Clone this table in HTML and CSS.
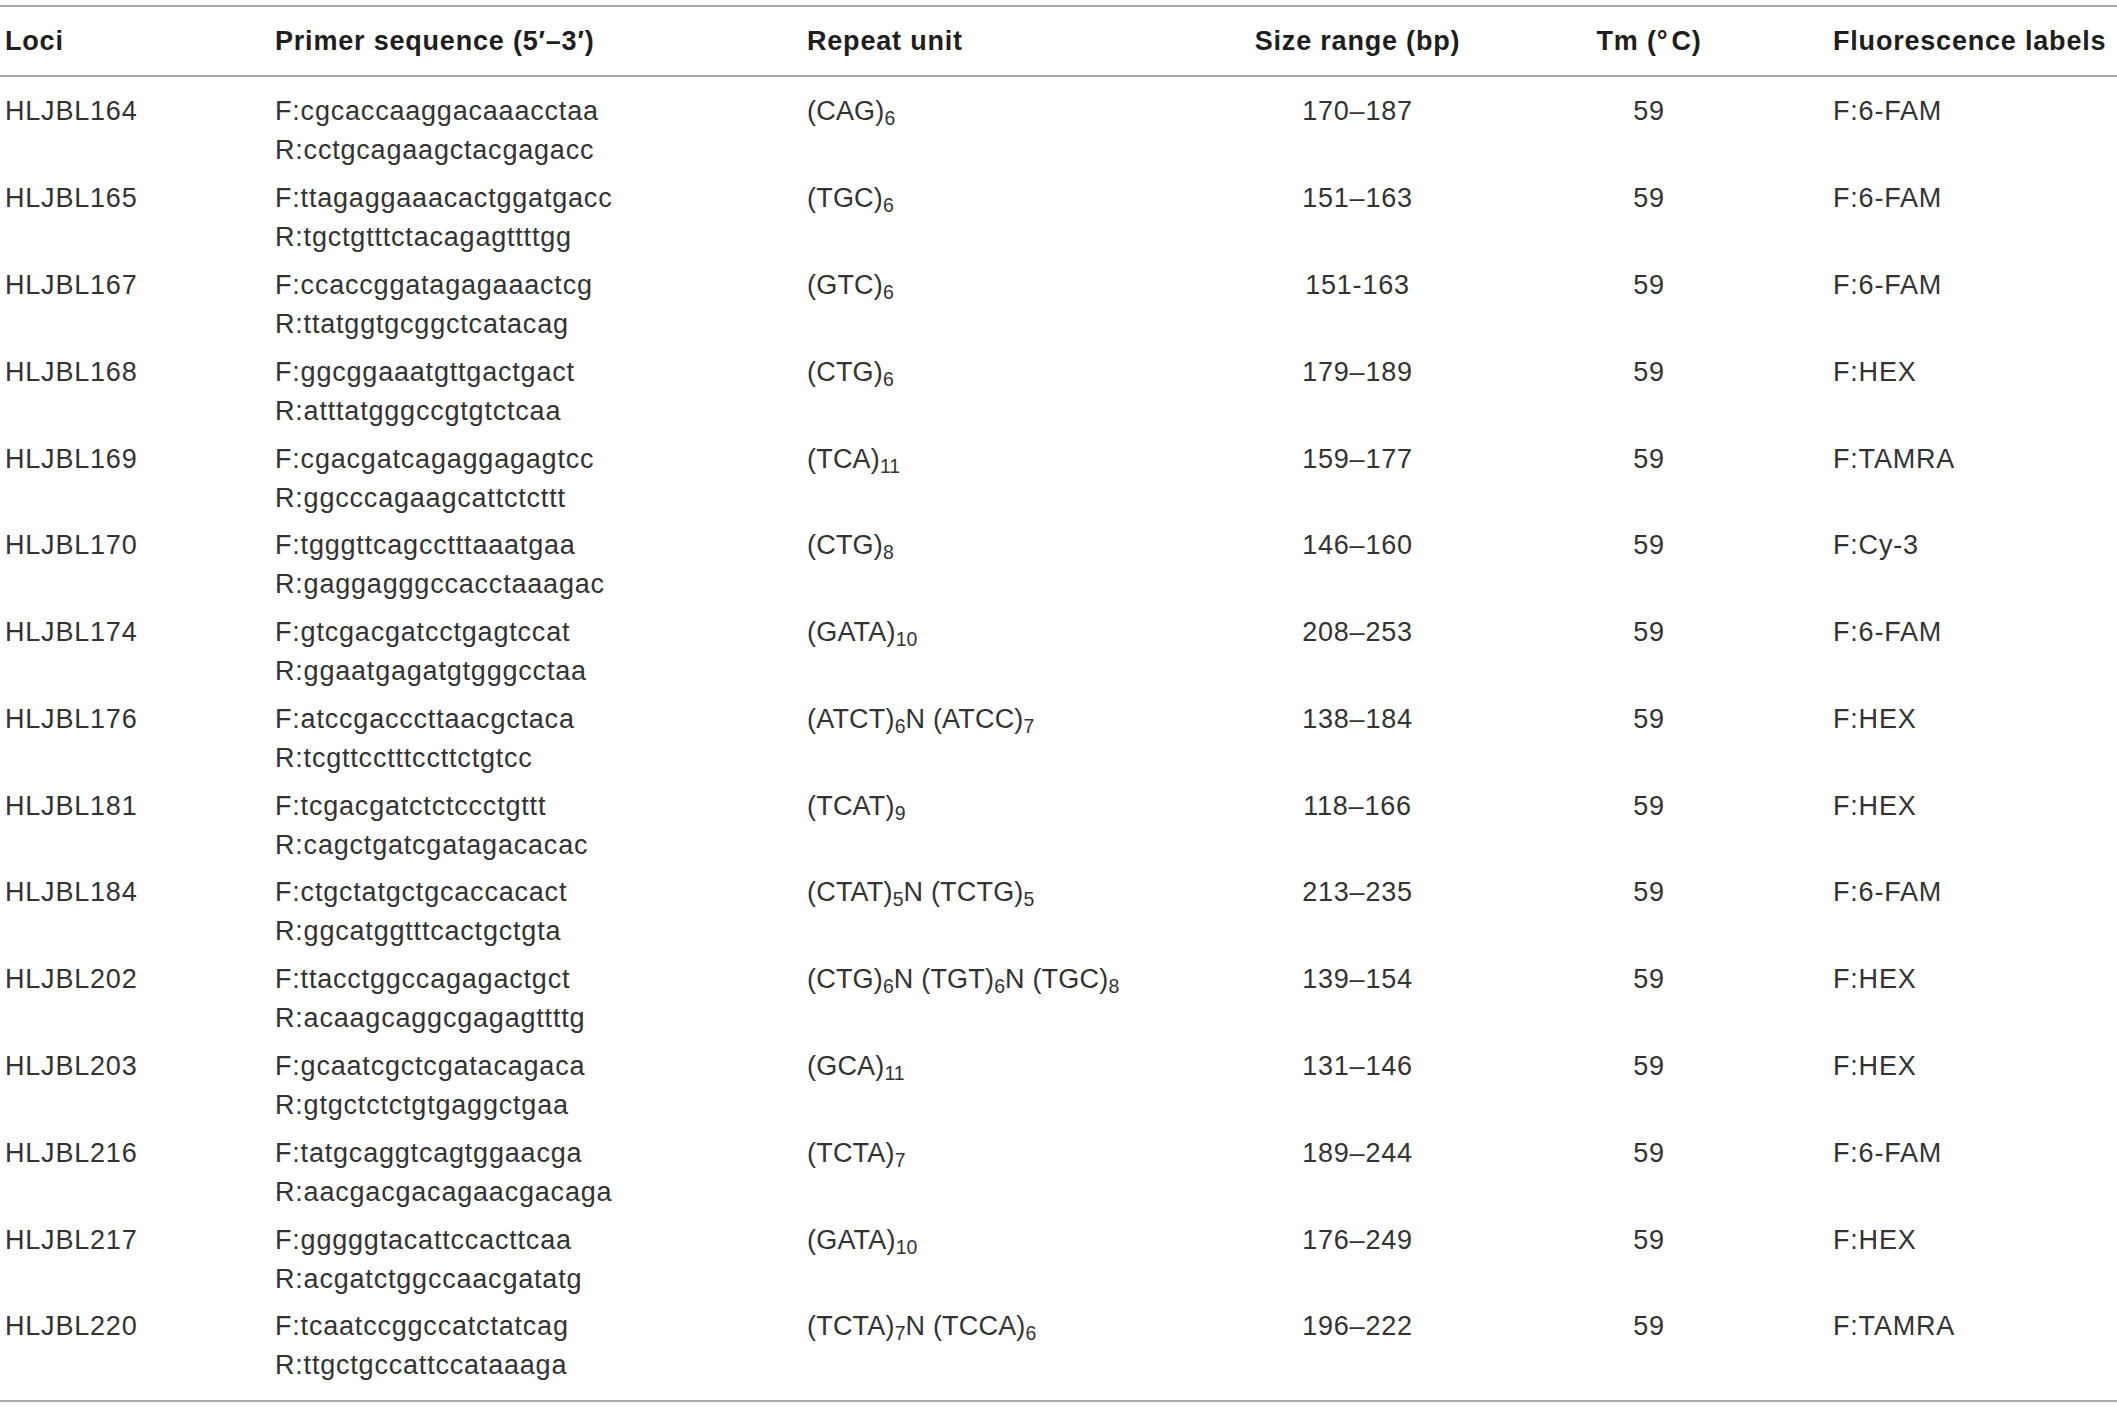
FILE: index.html
```html
<!DOCTYPE html>
<html lang="en">
<head>
<meta charset="utf-8">
<title>Primer table</title>
<link rel="stylesheet" href="styles.css">
</head>
<body>
<div class="table">
  <div class="head">
    <div class="cell">Loci</div>
    <div class="cell">Primer sequence (5′–3′)</div>
    <div class="cell">Repeat unit</div>
    <div class="cell center">Size range (bp)</div>
    <div class="cell center">Tm (°&#8202;C)</div>
    <div class="cell">Fluorescence labels</div>
  </div>
  <div class="body">
    <div class="row"><div class="cell">HLJBL164</div><div class="cell">F:cgcaccaaggacaaacctaa<br>R:cctgcagaagctacgagacc</div><div class="cell repeat">(CAG)<sub>6</sub></div><div class="cell center">170–187</div><div class="cell center">59</div><div class="cell">F:6-FAM</div></div>
    <div class="row"><div class="cell">HLJBL165</div><div class="cell">F:ttagaggaaacactggatgacc<br>R:tgctgtttctacagagttttgg</div><div class="cell repeat">(TGC)<sub>6</sub></div><div class="cell center">151–163</div><div class="cell center">59</div><div class="cell">F:6-FAM</div></div>
    <div class="row"><div class="cell">HLJBL167</div><div class="cell">F:ccaccggatagagaaactcg<br>R:ttatggtgcggctcatacag</div><div class="cell repeat">(GTC)<sub>6</sub></div><div class="cell center">151-163</div><div class="cell center">59</div><div class="cell">F:6-FAM</div></div>
    <div class="row"><div class="cell">HLJBL168</div><div class="cell">F:ggcggaaatgttgactgact<br>R:atttatgggccgtgtctcaa</div><div class="cell repeat">(CTG)<sub>6</sub></div><div class="cell center">179–189</div><div class="cell center">59</div><div class="cell">F:HEX</div></div>
    <div class="row"><div class="cell">HLJBL169</div><div class="cell">F:cgacgatcagaggagagtcc<br>R:ggcccagaagcattctcttt</div><div class="cell repeat">(TCA)<sub>11</sub></div><div class="cell center">159–177</div><div class="cell center">59</div><div class="cell">F:TAMRA</div></div>
    <div class="row"><div class="cell">HLJBL170</div><div class="cell">F:tgggttcagcctttaaatgaa<br>R:gaggagggccacctaaagac</div><div class="cell repeat">(CTG)<sub>8</sub></div><div class="cell center">146–160</div><div class="cell center">59</div><div class="cell">F:Cy-3</div></div>
    <div class="row"><div class="cell">HLJBL174</div><div class="cell">F:gtcgacgatcctgagtccat<br>R:ggaatgagatgtgggcctaa</div><div class="cell repeat">(GATA)<sub>10</sub></div><div class="cell center">208–253</div><div class="cell center">59</div><div class="cell">F:6-FAM</div></div>
    <div class="row"><div class="cell">HLJBL176</div><div class="cell">F:atccgacccttaacgctaca<br>R:tcgttcctttccttctgtcc</div><div class="cell repeat">(ATCT)<sub>6</sub>N (ATCC)<sub>7</sub></div><div class="cell center">138–184</div><div class="cell center">59</div><div class="cell">F:HEX</div></div>
    <div class="row"><div class="cell">HLJBL181</div><div class="cell">F:tcgacgatctctccctgttt<br>R:cagctgatcgatagacacac</div><div class="cell repeat">(TCAT)<sub>9</sub></div><div class="cell center">118–166</div><div class="cell center">59</div><div class="cell">F:HEX</div></div>
    <div class="row"><div class="cell">HLJBL184</div><div class="cell">F:ctgctatgctgcaccacact<br>R:ggcatggtttcactgctgta</div><div class="cell repeat">(CTAT)<sub>5</sub>N (TCTG)<sub>5</sub></div><div class="cell center">213–235</div><div class="cell center">59</div><div class="cell">F:6-FAM</div></div>
    <div class="row"><div class="cell">HLJBL202</div><div class="cell">F:ttacctggccagagactgct<br>R:acaagcaggcgagagttttg</div><div class="cell repeat">(CTG)<sub>6</sub>N (TGT)<sub>6</sub>N (TGC)<sub>8</sub></div><div class="cell center">139–154</div><div class="cell center">59</div><div class="cell">F:HEX</div></div>
    <div class="row"><div class="cell">HLJBL203</div><div class="cell">F:gcaatcgctcgatacagaca<br>R:gtgctctctgtgaggctgaa</div><div class="cell repeat">(GCA)<sub>11</sub></div><div class="cell center">131–146</div><div class="cell center">59</div><div class="cell">F:HEX</div></div>
    <div class="row"><div class="cell">HLJBL216</div><div class="cell">F:tatgcaggtcagtggaacga<br>R:aacgacgacagaacgacaga</div><div class="cell repeat">(TCTA)<sub>7</sub></div><div class="cell center">189–244</div><div class="cell center">59</div><div class="cell">F:6-FAM</div></div>
    <div class="row"><div class="cell">HLJBL217</div><div class="cell">F:gggggtacattccacttcaa<br>R:acgatctggccaacgatatg</div><div class="cell repeat">(GATA)<sub>10</sub></div><div class="cell center">176–249</div><div class="cell center">59</div><div class="cell">F:HEX</div></div>
    <div class="row"><div class="cell">HLJBL220</div><div class="cell">F:tcaatccggccatctatcag<br>R:ttgctgccattccataaaga</div><div class="cell repeat">(TCTA)<sub>7</sub>N (TCCA)<sub>6</sub></div><div class="cell center">196–222</div><div class="cell center">59</div><div class="cell">F:TAMRA</div></div>
  </div>
</div>
</body>
</html>
```

FILE: styles.css
```css
html, body {
  margin: 0;
  padding: 0;
  background: #ffffff;
}

body {
  font-family: "Liberation Sans", Arial, Helvetica, sans-serif;
  color: #333333;
}

.table {
  margin-top: 5px;
  width: 2117px;
}

.head,
.row {
  display: grid;
  grid-template-columns: 270px 532px 443px 215px 368px 1fr;
  padding-left: 5px;
}

.head {
  border-top: 2px solid #a9a9a9;
  border-bottom: 2px solid #a9a9a9;
  padding-top: 15px;
  padding-bottom: 14px;
  font-weight: bold;
  font-size: 27px;
  line-height: 39px;
  color: #1e1e1e;
  letter-spacing: 0.8px;
}

.body {
  padding-top: 11px;
  padding-bottom: 10px;
  border-bottom: 2px solid #a9a9a9;
}

.row {
  padding: 4.4px 0 4.4px 5px;
  font-size: 27px;
  line-height: 39px;
  letter-spacing: 0.8px;
}

.cell {
  white-space: nowrap;
}

.repeat {
  letter-spacing: 0.2px;
}

.center {
  text-align: center;
}

sub {
  font-size: 0.72em;
  line-height: 0;
  vertical-align: -0.28em;
  letter-spacing: 0;
}
```
